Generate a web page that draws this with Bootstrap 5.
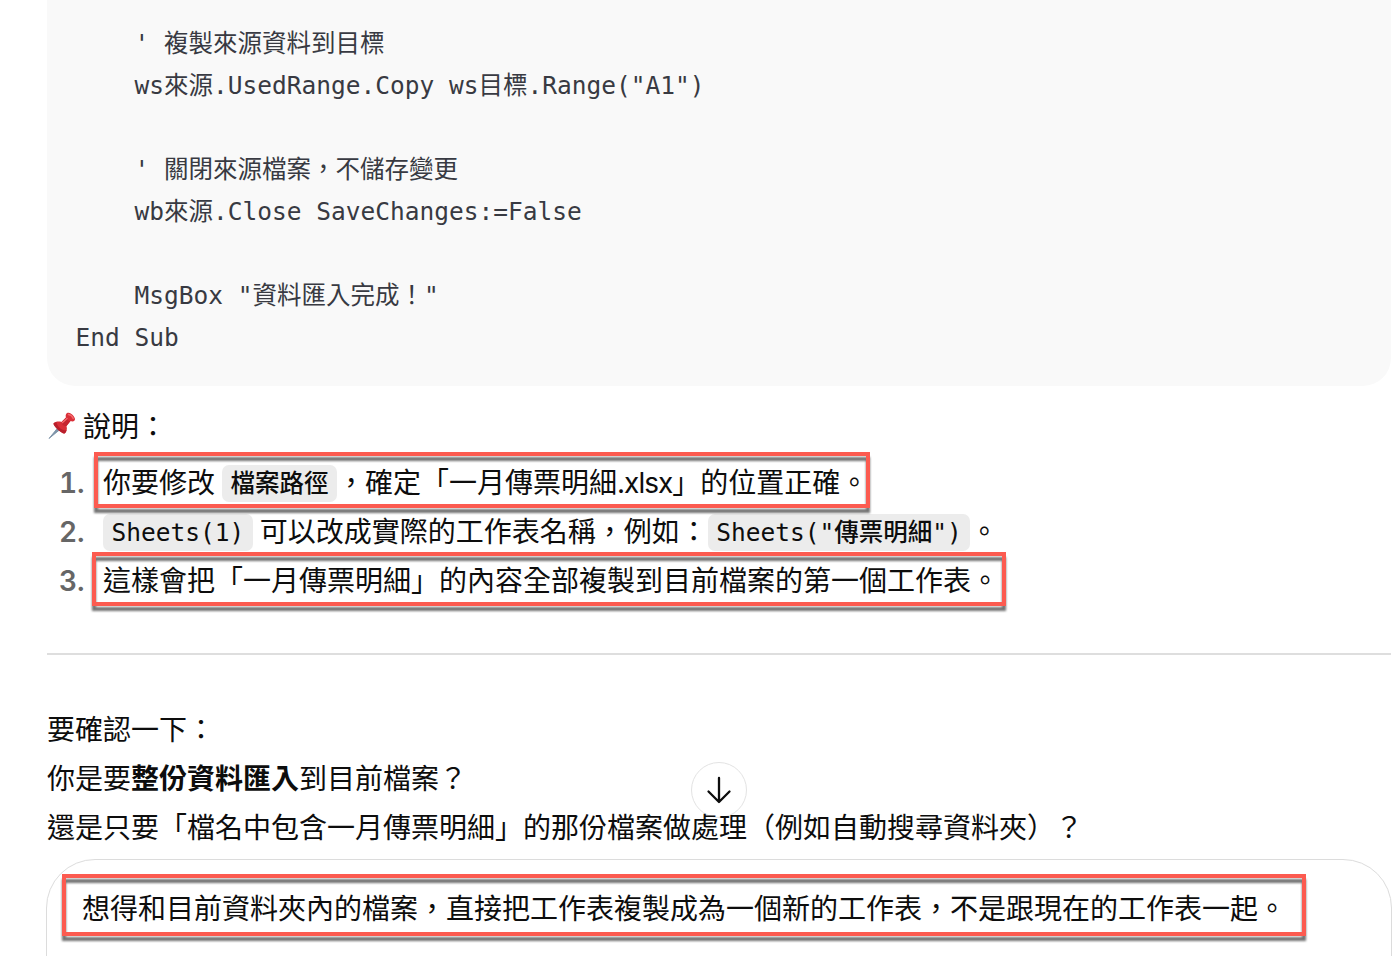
<!DOCTYPE html>
<html lang="zh-Hant">
<head>
<meta charset="utf-8">
<meta name="viewport" content="width=device-width, initial-scale=1">
<title>資料匯入</title>
<link rel="stylesheet" href="https://cdn.jsdelivr.net/npm/bootstrap@5.3.0/dist/css/bootstrap.min.css">
<style>
  body { font-family: Inter, "Noto Sans CJK TC", sans-serif; font-size: 28px; line-height: 49px; color: #0d0d0d; background: #fff; }
  .page { height: 956px; padding: 0 9px 0 47px; }
  .code-block { height: 386px; padding: 23px 29px 27px 28.5px; background: #f9f9f9; border-radius: 0 0 28px 28px; }
  .code-block pre { font: 24.5px/42px "DejaVu Sans Mono", "Noto Sans CJK TC", monospace; color: #383a42; }
  .intro { margin-top: 17px; padding-left: 1px; }
  .pin { width: 28px; height: 28px; margin: -4px 7px 0 0; }
  .steps { margin-top: 7px; }
  .step-no { width: 56px; padding-left: 12px; font-weight: 600; color: #666; white-space: nowrap; font-variant-numeric: tabular-nums; }
  .chip { font: 500 24.5px/37px "DejaVu Sans Mono", "Noto Sans CJK TC", monospace; color: #0d0d0d; background: #ececec; border-radius: 7px; padding: 0 8.5px; height: 37px; display: inline-block; }
  .chip-gap { width: 7px; }
  .file-ext { letter-spacing: -1px; }
  .rule-line { margin: 47px 0 51px; height: 2px; background: #dedede; }
  .composer { height: 160px; margin: 6px -1px 0; padding: 25px 35px 0; border: 1.5px solid #dcdcdc; border-radius: 49px; background: #fff; }
  .marked::before { content: ""; position: absolute; border: 4px solid #fc5b50; filter: drop-shadow(0 5px 1.3px rgba(0,0,0,.55)); z-index: 3; pointer-events: none; }
  .mark-a::before { left: -9px; top: -7px; width: 776px; height: 56px; }
  .mark-b::before { left: -11px; top: -5px; width: 914px; height: 54px; }
  .mark-c::before { left: -20px; top: -11px; width: 1244px; height: 62px; }
  .to-bottom { left: 691px; top: 762px; width: 56px; height: 56px; border: 1.5px solid #e3e3e3; background: #fff; z-index: 1; }
  .question { z-index: 2; }
  strong { font-weight: 700; }
</style>
</head>
<body>
<main class="page position-relative overflow-hidden">
  <div class="code-block"><pre class="m-0 overflow-visible">    ' 複製來源資料到目標
    ws來源.UsedRange.Copy ws目標.Range("A1")

    ' 關閉來源檔案，不儲存變更
    wb來源.Close SaveChanges:=False

    MsgBox "資料匯入完成！"
End Sub</pre></div>

  <section class="text-nowrap">
    <div class="intro d-flex align-items-center">
      <svg class="pin" viewBox="0 0 28 28" aria-hidden="true">
        <path d="M1 26.5 L10 15.500l2 2Z" fill="#7f96aa" stroke="#71899f" stroke-width=".8"/>
        <path d="M5.500 11.500C7 9.500 11 9 13.500 10L18 5.500C17 3 18.500.500 20.500.800C23.500 1.300 26.600 4.500 27 7C27 9.200 25 10 22.500 9L18.500 14C19.500 17 18.600 20.300 16.500 21.500C14.500 22.300 5 14 5.500 11.500Z" fill="#d92f38"/>
        <path d="M5.500 11.500C5 14 14.500 22.300 16.500 21.500C17.500 20.900 18.200 19.700 18.500 18.200C15 19 9 15 8.500 10.200C7.200 10.400 6.100 10.800 5.500 11.500Z" fill="#b81f2b"/>
        <path d="M18 5.500C19 8 20.500 9 22.500 9L18.500 14C16 14.500 13.500 12.500 13.500 10Z" fill="#c52530"/>
        <path d="M14.500 10.500L19 6.500M20.500 2.500C22.500 2.800 24.500 4.500 25.200 6.500" fill="none" stroke="#f3696b" stroke-width="1.400" stroke-linecap="round"/>
      </svg>
      <span>說明：</span>
    </div>

    <div class="steps">
      <div class="d-flex"><span class="step-no">1.</span><div class="d-flex align-items-center position-relative marked mark-a"><span>你要修改</span><span class="chip-gap"></span><span class="chip">檔案路徑</span><span>，確定「一月傳票明細<span class="file-ext">.xlsx</span>」的位置正確。</span></div></div>
      <div class="d-flex"><span class="step-no">2.</span><div class="d-flex align-items-center"><span class="chip">Sheets(1)</span><span class="chip-gap"></span><span>可以改成實際的工作表名稱，例如：</span><span class="chip">Sheets("傳票明細")</span><span>。</span></div></div>
      <div class="d-flex"><span class="step-no">3.</span><div class="position-relative marked mark-b">這樣會把「一月傳票明細」的內容全部複製到目前檔案的第一個工作表。</div></div>
    </div>
  </section>

  <div class="rule-line"></div>

  <section class="question position-relative text-nowrap">
    <div>要確認一下：</div>
    <div>你是要<strong>整份資料匯入</strong>到目前檔案？</div>
    <div>還是只要「檔名中包含一月傳票明細」的那份檔案做處理（例如自動搜尋資料夾）？</div>
  </section>

  <div class="composer text-nowrap"><div class="position-relative marked mark-c">想得和目前資料夾內的檔案，直接把工作表複製成為一個新的工作表，不是跟現在的工作表一起。</div></div>

  <button type="button" class="to-bottom position-absolute rounded-circle p-0 d-flex align-items-center justify-content-center" aria-label="捲動到底部">
    <svg width="28" height="30" viewBox="0 0 28 30" fill="none" stroke="#0d0d0d" stroke-width="2.300" stroke-linecap="round" stroke-linejoin="round"><path d="M14 3V27M3.500 16.500L14 27L24.500 16.500"/></svg>
  </button>
</main>
<script src="https://cdn.jsdelivr.net/npm/bootstrap@5.3.0/dist/js/bootstrap.bundle.min.js"></script>
</body>
</html>
